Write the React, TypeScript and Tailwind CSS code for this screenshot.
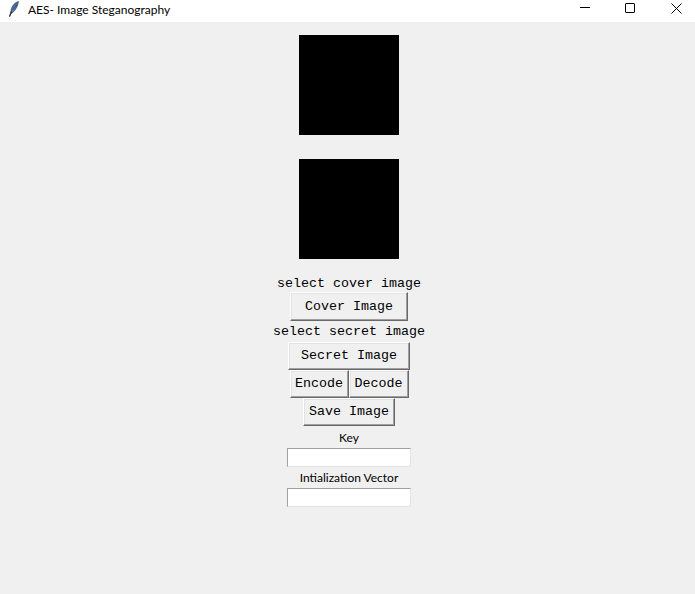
import React from "react";

const mono = { fontFamily: '"Liberation Mono", "Courier New", monospace' };
const ui = { fontFamily: 'Lato, "Noto Sans", sans-serif' };

function TkButton({ label, w, h = "h-[28px]" }: { label: string; w: string; h?: string }) {
  return (
    <div
      className={`${w} ${h} flex items-center justify-center bg-[#f0f0f0] border border-t-white border-l-white border-r-[#696969] border-b-[#696969] shadow-[inset_-1px_-1px_0_#a0a0a0,inset_1px_1px_0_#e3e3e3] text-[13.33px] text-black`}
      style={mono}
    >
      {label}
    </div>
  );
}

function TkEntry() {
  return (
    <div className="w-[124px] h-[19px] bg-white border border-t-[#a0a0a0] border-l-[#a0a0a0] border-r-[#e3e3e3] border-b-[#e3e3e3]" />
  );
}

export default function App() {
  return (
    <div className="w-[695px] h-[594px] bg-[#f0f0f0] flex flex-col overflow-hidden">
      {/* Title bar */}
      <div className="h-[22px] bg-white flex items-center relative shrink-0">
        <svg className="absolute left-[8px] top-[1px]" width="11" height="16" viewBox="0 0 11 16">
          <path d="M10.5 0.5 C6.5 1.5 3.8 5 3 9.5 L2.6 12 C4.5 9.5 7.5 6.5 9.5 3.5 C8 6.5 5.5 9.5 3.4 12.3 C6.8 10.5 9.5 6 10.5 0.5 Z" fill="#4a6a9a" stroke="#2a3f66" strokeWidth="0.6" />
          <path d="M3.4 11 L1.6 15.2" stroke="#1c2a44" strokeWidth="1.3" strokeLinecap="round" />
        </svg>
        <span className="absolute left-[28px] top-[1px] text-[12px] text-black leading-[18px]" style={ui}>
          AES- Image Steganography
        </span>
        <div className="absolute left-[580px] top-[7px] w-[10px] h-[1px] bg-black" />
        <div className="absolute left-[625px] top-[3px] w-[10px] h-[10px] border border-black rounded-[1px]" />
        <svg className="absolute left-[671px] top-[3px]" width="11" height="11" viewBox="0 0 11 11">
          <path d="M0.5 0.5 L10.5 10.5 M10.5 0.5 L0.5 10.5" stroke="#000" strokeWidth="1" />
        </svg>
      </div>

      {/* Body */}
      <div className="flex flex-col items-center pt-[13px] pl-[3px]">
        <div className="w-[100px] h-[100px] bg-black" />
        <div className="w-[100px] h-[100px] bg-black mt-[24px]" />
        <div className="mt-[16px] h-[17px] flex items-center text-[13.33px] text-black" style={mono}>
          select cover image
        </div>
        <TkButton label="Cover Image" w="w-[118px]" h="h-[29px]" />
        <div className="h-[21px] flex items-center text-[13.33px] text-black" style={mono}>
          select secret image
        </div>
        <TkButton label="Secret Image" w="w-[122px]" />
        <div className="flex">
          <TkButton label="Encode" w="w-[59px]" />
          <TkButton label="Decode" w="w-[60px]" />
        </div>
        <TkButton label="Save Image" w="w-[92px]" />
        <div className="h-[22px] pt-[1px] flex items-center text-[12px] text-black" style={ui}>
          Key
        </div>
        <TkEntry />
        <div className="h-[21px] pt-[1px] flex items-center text-[12px] text-black" style={ui}>
          Intialization Vector
        </div>
        <TkEntry />
      </div>
    </div>
  );
}
